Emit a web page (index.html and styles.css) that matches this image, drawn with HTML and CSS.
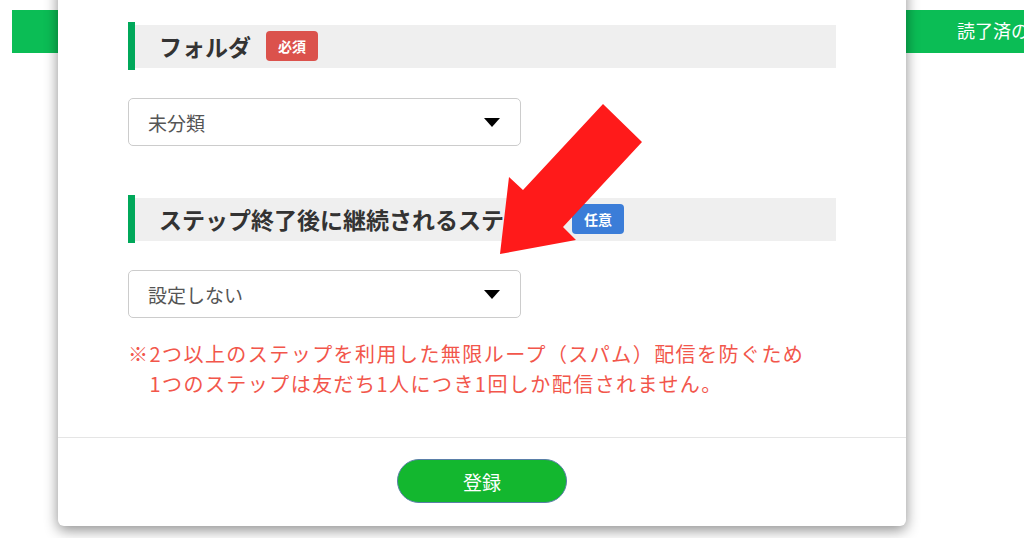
FILE: index.html
```html
<!DOCTYPE html>
<html lang="ja">

<head>
    <meta charset="UTF-8">
    <meta name="viewport" content="width=device-width, initial-scale=1.0">
    <title>ステップ設定</title>
    <link rel="stylesheet" href="styles.css">
</head>

<body>
    <!-- 後ろのページ -->
    <div class="page_head">
        <div class="tab tab_left"></div>
        <div class="tab tab_right">読了済の友だち</div>
    </div>

    <!-- モーダル -->
    <div class="modal">
        <div class="modal_body">
            <div class="field_head">
                <div class="head_bar"></div>
                <div class="head_box">
                    <h3>フォルダ</h3>
                    <span class="badge badge_required">必須</span>
                </div>
            </div>
            <div class="select_box">
                <span>未分類</span>
                <i class="caret"></i>
            </div>

            <div class="field_head field_next">
                <div class="head_bar"></div>
                <div class="head_box">
                    <h3>ステップ終了後に継続されるステップ</h3>
                    <span class="badge badge_optional">任意</span>
                </div>
            </div>
            <div class="select_box">
                <span>設定しない</span>
                <i class="caret"></i>
            </div>

            <p class="note">※2つ以上のステップを利用した無限ループ（スパム）配信を防ぐため<br>　1つのステップは友だち1人につき1回しか配信されません。</p>
        </div>
        <div class="modal_foot">
            <button class="submit">登録</button>
        </div>
    </div>

    <svg class="arrow" width="1024" height="538" viewBox="0 0 1024 538">
        <polygon points="603,104 642,142 563,227 576,240 500,254 509,177 523,190" fill="#ff1a1a" />
    </svg>
</body>

</html>
```

FILE: styles.css
```css
body {
    margin: 0;
    background-color: #fff;
    font-family: "Noto Sans CJK JP", "Noto Sans", sans-serif;
    overflow: hidden;
}

.page_head {
    display: flex;
    justify-content: space-between;
    padding-top: 10px;
    padding-left: 12px;
}

.tab {
    height: 43px;
    background-color: #0bbd55;
}

.tab_left {
    width: 200px;
}

.tab_right {
    width: 260px;
    padding-left: 193px;
    box-sizing: border-box;
    color: #fff;
    font-size: 18px;
    line-height: 41px;
    white-space: nowrap;
    overflow: hidden;
}

.modal {
    position: absolute;
    left: 58px;
    top: -20px;
    width: 848px;
    background-color: #fff;
    border-radius: 6px;
    box-shadow: 0 4px 14px rgba(0, 0, 0, 0.45);
}

.modal_body {
    padding: 42px 70px 38px;
}

.field_head {
    display: flex;
    align-items: center;
    height: 48px;
}

.field_next {
    margin-top: 49px;
}

.head_bar {
    width: 7px;
    height: 48px;
    background-color: #00a85a;
}

.head_box {
    flex: 1;
    height: 43px;
    display: flex;
    align-items: center;
    padding-left: 24px;
    background-color: #efefef;
}

.head_box h3 {
    margin: 0;
    font-size: 23px;
    font-weight: bold;
    color: #333;
}

.badge {
    margin-left: 15px;
    width: 52px;
    height: 30px;
    line-height: 30px;
    text-align: center;
    border-radius: 4px;
    color: #fff;
    font-size: 14px;
    font-weight: bold;
}

.badge_required {
    background-color: #db524c;
}

.badge_optional {
    margin-left: 22px;
    background-color: #3b7dd8;
}

.select_box {
    margin-top: 28px;
    width: 393px;
    height: 48px;
    box-sizing: border-box;
    display: flex;
    align-items: center;
    justify-content: space-between;
    padding: 0 20px 0 19px;
    border: 1px solid #ccc;
    border-radius: 5px;
    color: #555;
    font-size: 19px;
}

.field_next + .select_box {
    margin-top: 27px;
}

.caret {
    width: 0;
    height: 0;
    border-left: 8px solid transparent;
    border-right: 8px solid transparent;
    border-top: 9px solid #000;
}

.note {
    margin: 21px 0 0;
    color: #f2564b;
    font-size: 20px;
    line-height: 30px;
    letter-spacing: 1.45px;
}

.modal_foot {
    border-top: 1px solid #e5e5e5;
    padding: 21px 0 23px;
    text-align: center;
}

.submit {
    width: 170px;
    height: 44px;
    border: 1px solid #5a7fa8;
    border-radius: 22px;
    background-color: #13b72f;
    color: #fff;
    font-family: inherit;
    font-size: 19px;
}

.arrow {
    position: absolute;
    left: 0;
    top: 0;
    pointer-events: none;
}
```
